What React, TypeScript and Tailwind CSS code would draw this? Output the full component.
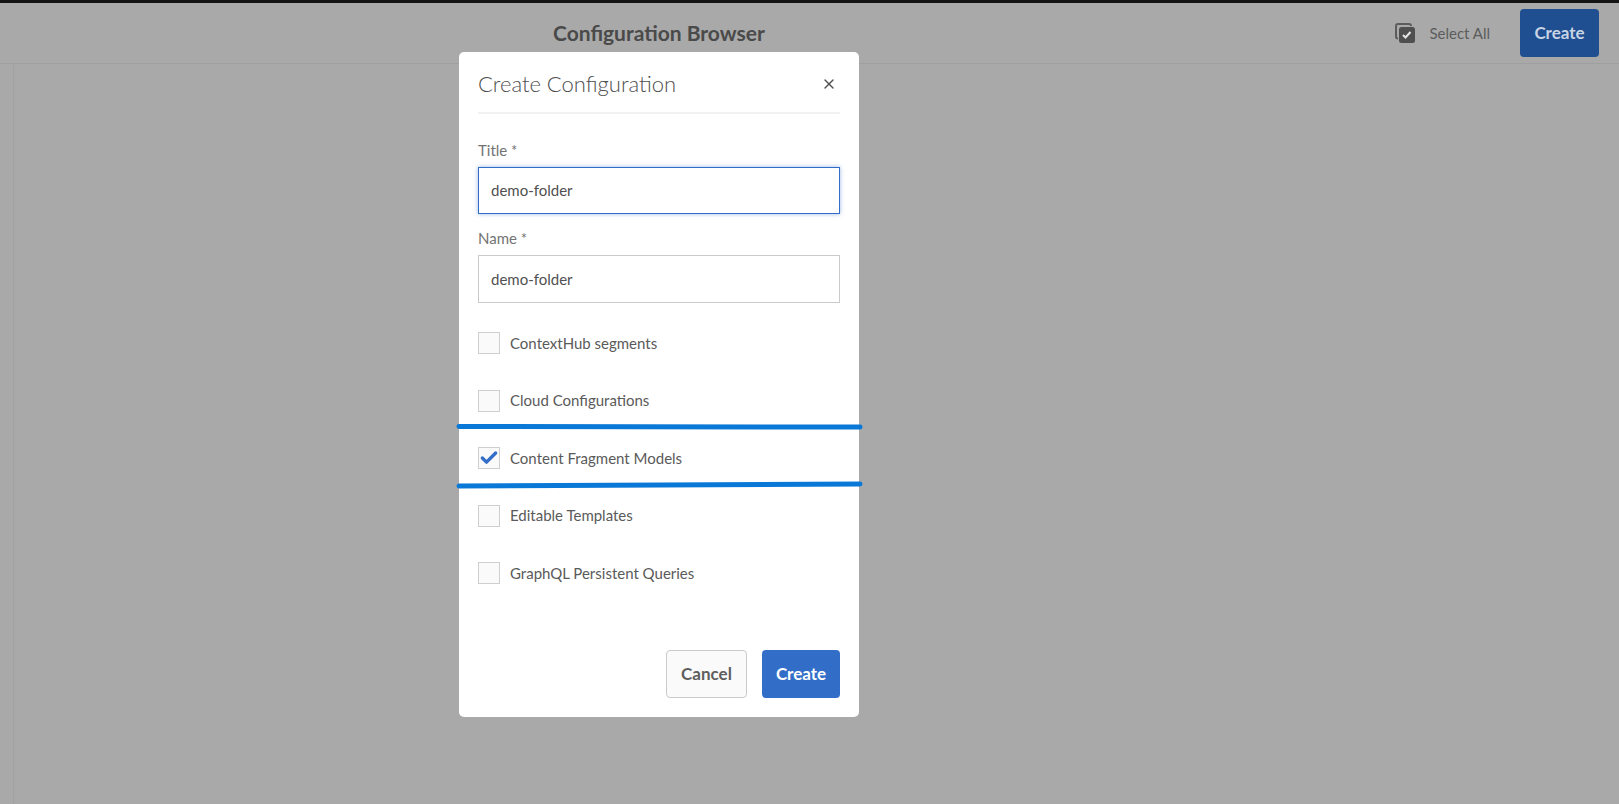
import { Check, X } from 'lucide-react';

const FONT = "font-['Lato','Open_Sans',sans-serif]";

const OPTIONS = [
  { label: 'ContextHub segments', checked: false },
  { label: 'Cloud Configurations', checked: false },
  { label: 'Content Fragment Models', checked: true },
  { label: 'Editable Templates', checked: false },
  { label: 'GraphQL Persistent Queries', checked: false },
];

function SelectAllIcon() {
  return (
    <svg width="20" height="20" viewBox="0 0 20 20" className="shrink-0">
      <rect x="1" y="1" width="15" height="14.500" rx="2" fill="none" stroke="#5c5c5c" strokeWidth="2" />
      <rect x="3" y="3" width="17" height="17" rx="3" fill="#a9a9a9" />
      <rect x="4" y="4" width="16" height="16" rx="2.500" fill="#4f4f4f" />
      <path d="M8 12l2.500 2.500 5-5.500" fill="none" stroke="#e4e4e4" strokeWidth="2" />
    </svg>
  );
}

function Field({ label, focused }: { label: string; focused?: boolean }) {
  return (
    <div className="flex flex-col">
      <label className="text-[15px] leading-[20px] text-[#737373] mb-[7px]">{label}</label>
      <div
        className={
          focused
            ? 'h-[47px] flex items-center px-3 text-[15px] text-[#505050] border border-[#326ec8] shadow-[0_0_4px_rgba(50,110,200,0.5)]'
            : 'h-[48px] flex items-center px-3 text-[15px] text-[#505050] border border-[#cacaca]'
        }
      >
        demo-folder
      </div>
    </div>
  );
}

function Option({ label, checked }: { label: string; checked: boolean }) {
  return (
    <div className="flex items-center h-[22px] gap-[10px]">
      <div className="w-[22px] h-[22px] flex items-center justify-center bg-[#fafafa] border border-[#cfcfcf]">
        {checked && <Check size={20} strokeWidth={4} className="text-[#326ec8]" />}
      </div>
      <span className="text-[15px] text-[#5a5a5a]">{label}</span>
    </div>
  );
}

export default function App() {
  return (
    <div className={`${FONT} relative h-screen overflow-hidden bg-[#a9a9a9] flex flex-col`}>
      <div className="h-[3px] bg-[#141414]" />
      <header className="h-[61px] flex items-center border-b border-[#9f9f9f] pl-[553px] pr-5">
        <h1 className="text-[21px] font-bold text-[#4a4a4a]">Configuration Browser</h1>
        <div className="ml-auto flex items-center">
          <SelectAllIcon />
          <span className="ml-[14px] text-[15px] text-[#5c5c5c]">Select All</span>
          <button className="ml-[30px] w-[79px] h-[48px] rounded-[4px] bg-[#1f4e91] text-[#c8d4e4] text-[17px] font-bold">
            Create
          </button>
        </div>
      </header>
      <div className="flex-1 flex">
        <div className="w-[14px] border-r border-[#a1a1a1]" />
      </div>

      {/* dialog */}
      <div className="absolute left-[459px] top-[52px] w-[400px] h-[665px] bg-white rounded-[5px] px-[19px] flex flex-col">
        <div className="h-[62px] shrink-0 flex items-center justify-between border-b-2 border-[#f1f1f1] mb-[26px] pt-[3px]">
          <h2 className="text-[22px] font-light text-[#4e4e4e]">Create Configuration</h2>
          <X size={16} strokeWidth={2} className="text-[#505050] mr-[3px]" />
        </div>
        <div className="flex flex-col gap-[14px]">
          <Field label="Title *" focused />
          <Field label="Name *" />
        </div>
        <div className="mt-[29px] flex flex-col gap-[35.500px]">
          {OPTIONS.map((o) => (
            <Option key={o.label} label={o.label} checked={o.checked} />
          ))}
        </div>
        <div className="mt-auto mb-[19px] flex justify-end gap-[15px]">
          <button className="w-[81px] h-[48px] rounded-[4px] bg-[#fafafa] border border-[#cacaca] text-[17px] font-bold text-[#5e5e5e]">
            Cancel
          </button>
          <button className="w-[78px] h-[48px] rounded-[4px] bg-[#326ec8] text-[17px] font-bold text-white">
            Create
          </button>
        </div>
      </div>

      {/* hand-drawn annotation lines */}
      <svg width="1619" height="804" className="absolute inset-0 pointer-events-none">
        <path d="M459 426.500L860 427" stroke="#0a78d7" strokeWidth="5" strokeLinecap="round" />
        <path d="M459 486L860 484" stroke="#0a78d7" strokeWidth="5" strokeLinecap="round" />
      </svg>
    </div>
  );
}
